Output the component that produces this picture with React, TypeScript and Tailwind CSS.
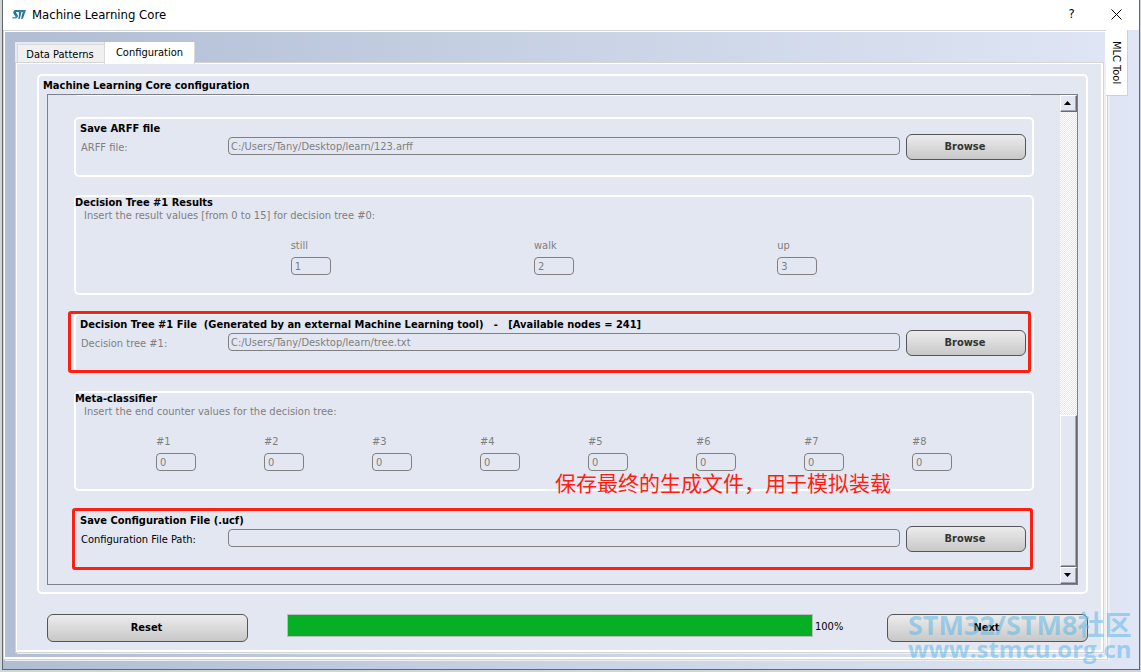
import { useState, type ReactNode } from "react";

function Logo() {
  return (
    <svg viewBox="0 0 28 16" className="h-[9px] w-3.5" preserveAspectRatio="none" aria-hidden="true">
      <defs>
        <linearGradient id="logo-fill" x1="0" y1="1" x2="1" y2="0">
          <stop offset="0" stopColor="#6fb0cc" />
          <stop offset="0.4" stopColor="#1f7095" />
          <stop offset="1" stopColor="#3f87a8" />
        </linearGradient>
      </defs>
      <g fill="url(#logo-fill)">
        <path d="M7 0h21l-1.200 3.500H9.500c-1.800 0-1.800 1.200-1 2l2.500 2.800c2.200 3-.2 6.700-4 6.700H0l1-2.500h4.500c1.500 0 1.500-1 .7-1.800L4 8C1.500 5 3 0 7 0z" />
        <path d="M13.500 3.500h5.500L15.500 16h-3.500l1.500-5c1-3.500 0-5.500 0-7.500z" />
        <path d="M21.500 3.500h5.300L21.500 16h-4z" />
      </g>
    </svg>
  );
}

function Card({ children, tall, mark }: { children: ReactNode; tall?: boolean; mark?: string }) {
  return (
    <section className="relative">
      <div className={`rounded-[5px] border-2 border-white ${tall ? "h-[100px]" : "h-[60px]"}`}>{children}</div>
      {mark && <div className={`pointer-events-none absolute rounded-[3px] border-3 border-[#fe1f12] ${mark}`} />}
    </section>
  );
}

function FileCard({ id, title, label, value, mark, active }: { id: string; title: string; label: string; value: string; mark?: string; active?: boolean }) {
  const [text, setText] = useState(value);
  return (
    <Card mark={mark}>
      <div className="flex h-full items-start pr-1.5 pl-1">
        <div className="w-[148px] shrink-0 pt-0.5">
          <h3 className="h-4 text-[11px] leading-4 font-bold whitespace-pre">{title}</h3>
          <label htmlFor={id} className={`mt-1 block pl-px text-[11px] leading-[14px] ${active ? "text-black" : "text-[#7f7f7f]"}`}>
            {label}
          </label>
        </div>
        <input
          id={id}
          value={text}
          onChange={(e) => setText(e.target.value)}
          className="mt-[18px] h-[18px] min-w-0 flex-1 rounded-[4px] border border-[#808080] bg-transparent px-0.5 pt-px text-[11px] text-[#7f7f7f]"
        />
        <button type="button" className="mt-[15px] ml-1.5 h-[26px] w-[120px] rounded-[6px] border border-[#555] bg-linear-to-b from-[#ececec] to-[#c8c8c8] pt-px pr-0.5 text-[11px] font-bold text-[#333]">
          Browse
        </button>
      </div>
    </Card>
  );
}

function ValuesCard({ title, hint, fields, pad }: { title: string; hint: string; fields: [string, string][]; pad: string }) {
  return (
    <Card tall>
      <h3 className="-ml-px h-3 text-[11px] leading-3 font-bold">{title}</h3>
      <p className="pl-2 text-[11px] leading-[14px] text-[#7f7f7f]">{hint}</p>
      <div className={`mt-4 flex ${pad}`}>
        {fields.map(([name, value]) => (
          <label key={name} className="flex flex-1 flex-col items-center text-[11px] leading-[14px] text-[#7f7f7f]">
            <span className="w-10">{name}</span>
            <input defaultValue={value} className="mt-1 h-[18px] w-10 rounded-[4px] border border-[#808080] bg-transparent px-[3px] pt-px text-[11px] text-[#7f7f7f]" />
          </label>
        ))}
      </div>
    </Card>
  );
}

function ScrollBar() {
  const raised = "border border-t-white border-l-white border-r-[#6b6b6b] border-b-[#6b6b6b] bg-[#e3e7f2] shadow-[inset_-1px_-1px_0_#a3a6ae]";
  return (
    <div className="flex w-[17px] shrink-0 flex-col bg-[repeating-conic-gradient(#ffffff_0_25%,#e3e7f2_0_50%)] bg-size-[2px_2px]">
      <button type="button" aria-label="Scroll up" className={`flex h-[17px] items-center justify-center pr-0.5 pb-0.5 ${raised}`}>
        <svg viewBox="0 0 7 4" className="h-1 w-[7px]"><path d="M0 4L3.500 0L7 4z" /></svg>
      </button>
      <div className="h-[303px]" />
      <div className={`flex-1 ${raised}`} />
      <button type="button" aria-label="Scroll down" className={`flex h-[17px] items-center justify-center pr-0.5 pb-0.5 ${raised}`}>
        <svg viewBox="0 0 7 4" className="h-1 w-[7px]"><path d="M0 0L3.500 4L7 0z" /></svg>
      </button>
    </div>
  );
}

const wideButton = "h-7 w-[201px] shrink-0 rounded-[6px] border border-[#555] bg-linear-to-b from-[#ececec] to-[#c8c8c8] pt-px pr-0.5 text-[11px] font-bold text-black";

export default function App() {
  return (
    <div className="flex min-h-screen flex-col bg-[#cfd6d8] pr-px pb-0.5 pl-0.5 font-['DejaVu_Sans_Condensed','Noto_Sans_CJK_SC',sans-serif] text-black">
      <div className="flex flex-1 flex-col border-r border-b border-l border-[#63676d] bg-linear-to-r from-[#b0bdd3] via-[#c9d3e5] to-[#e0e6f5]">
        <header className="flex h-[30px] shrink-0 items-center bg-white pb-0.5 pl-[9px]">
          <Logo />
          <h1 className="ml-1.5 flex-1 pt-px text-[13px] leading-5">Machine Learning Core</h1>
          <button type="button" className="w-[45px] text-[13px]">?</button>
          <button type="button" aria-label="Close" className="flex w-[45px] justify-center">
            <svg viewBox="0 0 11 11" className="size-[11px]" fill="none" stroke="#000"><path d="M.5.5l10 10M10.500.5l-10 10" /></svg>
          </button>
        </header>

        <div className="flex flex-1 items-stretch pr-[11px] pb-[9px]">
          <div className="mr-px flex min-w-0 flex-1 flex-col border border-[#d4d4d4] pt-[11px] pr-[3px] pb-1.5 pl-[11px] shadow-[inset_1px_1px_0_#fff,inset_-2px_-2px_0_#fff,2px_1px_0_#efefef]">
            <div className="flex h-5 items-end">
              <div className="flex h-5 items-end bg-[#e6eaf4] pl-0.5">
                <button type="button" className="h-[18px] w-[87px] border-t border-l border-[#d9d9d9] bg-[#f0f0f0] pr-0.5 text-[11px] leading-[19px]">Data Patterns</button>
              </div>
              <button type="button" className="relative -mb-0.5 h-[22px] w-[91px] border-r border-l border-[#d9d9d9] bg-white text-[11px] leading-5">Configuration</button>
            </div>

            <main className="flex flex-1 flex-col border border-[#d4d4d4] bg-[#e3e7f2] pt-[11px] pr-[15px] pb-[10px] pl-[21px] shadow-[inset_1px_1px_0_#fff,inset_-2px_-2px_0_#fff,2px_1px_0_#efefef]">
              <section className="flex flex-1 flex-col rounded-[5px] border-2 border-white px-2 pb-[7px]">
                <h2 className="-ml-1 h-[18px] text-[11px] leading-5 font-bold">Machine Learning Core configuration</h2>
                <div className="flex flex-1 border border-[#7e818c]">
                  <div className="min-w-0 flex-1 px-[26px] pb-[15px]">
                    <div className="mx-[3px] h-[22px] border-t border-white" />
                    <div className="flex flex-col gap-[18px]">
                      <FileCard id="arff" title="Save ARFF file" label="ARFF file:" value="C:/Users/Tany/Desktop/learn/123.arff" />
                      <ValuesCard title="Decision Tree #1 Results" hint="Insert the result values [from 0 to 15] for decision tree #0:" pad="px-[113px]" fields={[["still", "1"], ["walk", "2"], ["up", "3"]]} />
                      <FileCard
                        id="tree"
                        title="Decision Tree #1 File  (Generated by an external Machine Learning tool)   -   [Available nodes = 241]"
                        label="Decision tree #1:"
                        value="C:/Users/Tany/Desktop/learn/tree.txt"
                        mark="-top-0.5 right-[3px] bottom-0 -left-1.5"
                      />
                      <div className="relative">
                        <ValuesCard title="Meta-classifier" hint="Insert the end counter values for the decision tree:" pad="px-[46px]" fields={["#1", "#2", "#3", "#4", "#5", "#6", "#7", "#8"].map((n): [string, string] => [n, "0"])} />
                        <p className="absolute right-[143px] -bottom-2 text-[21px] leading-[30px] font-normal whitespace-nowrap text-[#fe1f12]">保存最终的生成文件，用于模拟装载</p>
                      </div>
                      <FileCard id="ucf" title="Save Configuration File (.ucf)" label="Configuration File Path:" value="" active mark="-inset-y-px right-px -left-0.5" />
                    </div>
                  </div>
                  <ScrollBar />
                </div>
              </section>

              <footer className="relative mt-5 flex items-start pl-2.5">
                <button type="button" className={wideButton}>Reset</button>
                <div role="progressbar" aria-label="Progress" aria-valuenow={100} className="ml-[39px] h-[23px] flex-1 border border-[#bcbcbc] bg-[#06b025]" />
                <span className="w-[74px] pl-0.5 text-[11px] leading-[26px]">100%</span>
                <button type="button" className={wideButton}>Next</button>
                <div className="pointer-events-none absolute -top-0.5 -right-[46px] w-[226px] font-['Open_Sans','Noto_Sans_CJK_SC',sans-serif] leading-6 font-bold whitespace-nowrap text-[#55b4e6]/50">
                  <div className="text-[27px] leading-[26px]">STM32/STM8社区</div>
                  <div className="text-[24px] leading-[22px]">www.stmcu.org.cn</div>
                </div>
              </footer>
            </main>
          </div>
          <button type="button" className="relative -ml-[3px] flex h-[66px] w-[22px] shrink-0 items-center justify-center self-start border-r border-b border-[#d0d0d0] bg-white pr-0.5 text-[11px] [writing-mode:vertical-rl]">
            MLC Tool
          </button>
        </div>
      </div>
    </div>
  );
}
